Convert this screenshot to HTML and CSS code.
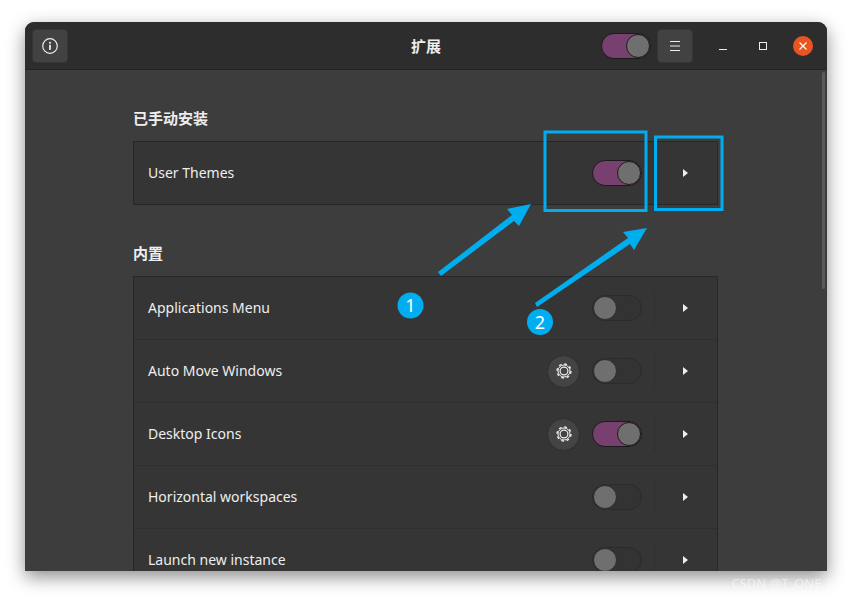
FILE: index.html
```html
<!DOCTYPE html>
<html lang="zh-CN">
<head>
    <meta charset="UTF-8">
    <meta name="viewport" content="width=device-width, initial-scale=1.0">
    <title>扩展</title>
    <link rel="stylesheet" href="styles.css">
</head>
<body>
    <div class="window">
        <header class="headerbar">
            <div class="header-left">
                <button class="header-btn" aria-label="About">
                    <svg width="16" height="16" viewBox="0 0 16 16"><circle cx="8" cy="8" r="7.3" fill="none" stroke="#eee" stroke-width="1.2"/><rect x="7.1" y="6.8" width="1.8" height="5" fill="#eee"/><rect x="7.1" y="3.9" width="1.8" height="1.8" fill="#eee"/></svg>
                </button>
            </div>
            <div class="header-title">扩展</div>
            <div class="header-right">
                <div class="switch on"><span class="knob"></span></div>
                <button class="header-btn" aria-label="Menu">
                    <svg width="10" height="10" viewBox="0 0 10 10"><path d="M0 .5h10M0 5h10M0 9.500h10" stroke="#eee" stroke-width="1"/></svg>
                </button>
                <div class="window-controls">
                    <svg class="wc-min" width="8" height="8" viewBox="0 0 8 8"><path d="M0 7.500h8" stroke="#eee" stroke-width="1"/></svg>
                    <svg class="wc-max" width="8" height="8" viewBox="0 0 8 8"><rect x=".5" y=".5" width="7" height="7" fill="none" stroke="#eee" stroke-width="1"/></svg>
                    <div class="wc-close">
                        <svg width="8" height="8" viewBox="0 0 8 8"><path d="M.5.5l7 7M7.500.5l-7 7" stroke="#fff" stroke-width="1.2"/></svg>
                    </div>
                </div>
            </div>
        </header>

        <main class="content">
            <h3 class="section-title">已手动安装</h3>
            <div class="list">
                <div class="row">
                    <span class="row-name">User Themes</span>
                    <div class="switch on"><span class="knob"></span></div>
                    <div class="row-more"><span class="arrow"></span></div>
                </div>
            </div>

            <h3 class="section-title second">内置</h3>
            <div class="list">
                <div class="row">
                    <span class="row-name">Applications Menu</span>
                    <div class="switch"><span class="knob"></span></div>
                    <div class="row-more"><span class="arrow"></span></div>
                </div>
                <div class="row">
                    <span class="row-name">Auto Move Windows</span>
                    <div class="gear-btn">
                        <svg width="16" height="16" viewBox="0 0 16 16"><circle cx="8" cy="8" r="7" fill="none" stroke="#eee" stroke-width="1.4" stroke-dasharray="2.75 2.75"/><circle cx="8" cy="8" r="6" fill="none" stroke="#eee" stroke-width="1"/><circle cx="8" cy="8" r="3.9" fill="none" stroke="#eee" stroke-width="1.2"/></svg>
                    </div>
                    <div class="switch"><span class="knob"></span></div>
                    <div class="row-more"><span class="arrow"></span></div>
                </div>
                <div class="row">
                    <span class="row-name">Desktop Icons</span>
                    <div class="gear-btn">
                        <svg width="16" height="16" viewBox="0 0 16 16"><circle cx="8" cy="8" r="7" fill="none" stroke="#eee" stroke-width="1.4" stroke-dasharray="2.75 2.75"/><circle cx="8" cy="8" r="6" fill="none" stroke="#eee" stroke-width="1"/><circle cx="8" cy="8" r="3.9" fill="none" stroke="#eee" stroke-width="1.2"/></svg>
                    </div>
                    <div class="switch on"><span class="knob"></span></div>
                    <div class="row-more"><span class="arrow"></span></div>
                </div>
                <div class="row">
                    <span class="row-name">Horizontal workspaces</span>
                    <div class="switch"><span class="knob"></span></div>
                    <div class="row-more"><span class="arrow"></span></div>
                </div>
                <div class="row">
                    <span class="row-name">Launch new instance</span>
                    <div class="switch"><span class="knob"></span></div>
                    <div class="row-more"><span class="arrow"></span></div>
                </div>
            </div>
        </main>

        <div class="scrollbar"></div>
    </div>

    <!-- annotations drawn on top of the screenshot -->
    <svg class="annotations" width="852" height="599" viewBox="0 0 852 599">
        <rect x="545" y="132" width="101" height="78.5" fill="none" stroke="#00aeef" stroke-width="3"/>
        <rect x="655.5" y="137" width="66.5" height="72.5" fill="none" stroke="#00aeef" stroke-width="3"/>
        <path d="M438 272L512 215L507 209L531 204L519 226L514 221L441 276z" fill="#00aeef"/>
        <path d="M535 303L628 238L623 232L647 228L634 250L630 244L537 307z" fill="#00aeef"/>
        <circle cx="410.500" cy="305.500" r="13" fill="#00aeef"/>
        <circle cx="540" cy="322" r="13" fill="#00aeef"/>
        <text x="410.500" y="312" class="badge-num">1</text>
        <text x="540" y="329" class="badge-num">2</text>
    </svg>

    <div class="watermark">CSDN @T_ONE |</div>
</body>
</html>
```

FILE: styles.css
```css
html, body {
    margin: 0;
    height: 100%;
    overflow: hidden;
    background-color: #fff;
    font-family: "Noto Sans", "Noto Sans CJK SC", sans-serif;
}
.window {
    position: relative;
    width: 802px;
    height: 549px;
    margin: 22px 0 0 25px;
    border-radius: 9px 9px 0 0;
    background-color: #3d3d3d;
    box-shadow: 0 6px 18px rgba(0, 0, 0, 0.45);
    overflow: hidden;
    color: #eee;
}
.headerbar {
    display: grid;
    grid-template-columns: 1fr auto 1fr;
    align-items: center;
    height: 47px;
    padding: 0 7px;
    background-color: #2d2d2d;
    border-bottom: 1px solid #232323;
}
.header-left {
    display: flex;
}
.header-right {
    display: flex;
    align-items: center;
    justify-content: flex-end;
    gap: 6px;
}
.header-title {
    font-size: 15px;
    font-weight: 700;
    font-family: "Noto Sans CJK SC", sans-serif;
}
.header-btn {
    display: flex;
    align-items: center;
    justify-content: center;
    width: 36px;
    height: 34px;
    padding: 0;
    background-color: #424242;
    border: 1px solid #353535;
    border-radius: 4px;
}
.window-controls {
    display: flex;
    align-items: center;
    width: 127px;
    margin-left: -6px;
    padding-left: 26px;
    box-sizing: border-box;
}
.wc-min {
    margin-right: 32px;
}
.wc-max {
    margin-right: 26px;
}
.wc-close {
    display: flex;
    align-items: center;
    justify-content: center;
    width: 20px;
    height: 20px;
    border-radius: 50%;
    background-color: #e95420;
}
.switch {
    position: relative;
    display: flex;
    width: 50px;
    height: 26px;
    box-sizing: border-box;
    border: 1px solid #2b2b2b;
    border-radius: 13px;
    background-color: #333;
}
.switch.on {
    justify-content: flex-end;
    background-color: #77406f;
    border-color: #1b1b1b;
}
.knob {
    width: 24px;
    height: 24px;
    box-sizing: border-box;
    border-radius: 50%;
    background-color: #6f6f6f;
    border: 1px solid #2b2b2b;
}
.switch.on .knob {
    border-color: #1b1b1b;
}
.content {
    width: 585px;
    padding: 38px 0 0 108px;
}
.section-title {
    margin: 0 0 14px;
    height: 19px;
    line-height: 19px;
    font-size: 15px;
    font-weight: 700;
    font-family: "Noto Sans CJK SC", sans-serif;
}
.section-title.second {
    margin-top: 38px;
}
.list {
    background-color: #353535;
    border: 1px solid #272727;
}
.row {
    display: flex;
    align-items: center;
    height: 62px;
    padding-left: 14px;
    border-top: 1px solid #2f2f2f;
}
.row:first-child {
    border-top: 0;
}
.row-name {
    flex: 1;
    padding-bottom: 2px;
    font-size: 14px;
}
.gear-btn {
    display: flex;
    align-items: center;
    justify-content: center;
    width: 33px;
    height: 33px;
    margin-right: 12px;
    box-sizing: border-box;
    border-radius: 50%;
    background-color: #444;
    border: 1px solid #2f2f2f;
}
.row-more {
    display: flex;
    align-items: center;
    justify-content: center;
    width: 60px;
    height: 36px;
    margin-left: 12px;
    padding-right: 2px;
    border-left: 1px solid #2f2f2f;
}
.arrow {
    width: 0;
    height: 0;
    border-left: 5px solid #eee;
    border-top: 4.5px solid transparent;
    border-bottom: 4.5px solid transparent;
}
.scrollbar {
    position: absolute;
    top: 50px;
    right: 2px;
    width: 3px;
    height: 217px;
    border-radius: 2px;
    background-color: #5a5a5a;
}
.annotations {
    position: absolute;
    top: 0;
    left: 0;
}
.badge-num {
    fill: #fff;
    font-size: 18px;
    text-anchor: middle;
}
.watermark {
    position: absolute;
    top: 574px;
    right: 20px;
    font-size: 13px;
    color: rgba(255, 255, 255, 0.55);
}
```
